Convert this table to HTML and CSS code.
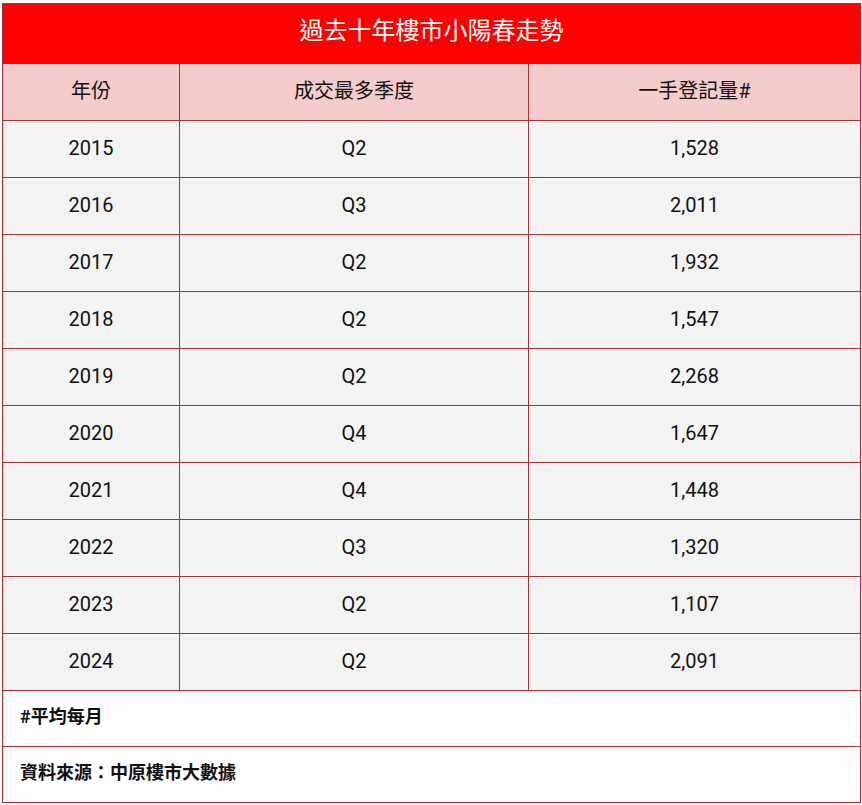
FILE: index.html
```html
<!DOCTYPE html>
<html lang="zh-Hant">
<head>
<meta charset="utf-8">
<title>過去十年樓市小陽春走勢</title>
<link rel="stylesheet" href="styles.css">
</head>
<body>
<table class="data">
  <colgroup>
    <col class="c1"><col class="c2"><col class="c3">
  </colgroup>
  <thead>
    <tr class="title-row"><th colspan="3">過去十年樓市小陽春走勢</th></tr>
    <tr class="head-row"><th>年份</th><th>成交最多季度</th><th>一手登記量#</th></tr>
  </thead>
  <tbody>
    <tr><td>2015</td><td>Q2</td><td>1,528</td></tr>
    <tr><td>2016</td><td>Q3</td><td>2,011</td></tr>
    <tr><td>2017</td><td>Q2</td><td>1,932</td></tr>
    <tr><td>2018</td><td>Q2</td><td>1,547</td></tr>
    <tr><td>2019</td><td>Q2</td><td>2,268</td></tr>
    <tr><td>2020</td><td>Q4</td><td>1,647</td></tr>
    <tr><td>2021</td><td>Q4</td><td>1,448</td></tr>
    <tr><td>2022</td><td>Q3</td><td>1,320</td></tr>
    <tr><td>2023</td><td>Q2</td><td>1,107</td></tr>
    <tr><td>2024</td><td>Q2</td><td>2,091</td></tr>
  </tbody>
  <tfoot>
    <tr><td colspan="3">#平均每月</td></tr>
    <tr><td colspan="3">資料來源：中原樓市大數據</td></tr>
  </tfoot>
</table>
</body>
</html>
```
FILE: styles.css
```css
html, body {
  margin: 0;
  padding: 0;
  background: #ffffff;
}
body {
  padding: 3px 2px 0 2px;
  font-family: Roboto, "Noto Sans CJK TC", sans-serif;
  color: #111;
}
.data {
  width: 858px;
  border-collapse: collapse;
  table-layout: fixed;
  font-size: 20px;
}
.c1 { width: 177px; }
.c2 { width: 349px; }
.c3 { width: 332px; }
.data th, .data td {
  border: 1px solid #a83232;
  text-align: center;
  padding: 0 0 3px 0;
  font-weight: normal;
  line-height: 1.2;
}
.data .title-row th {
  background: #ff0000;
  color: #ffffff;
  height: 54px;
  padding-bottom: 5px;
  font-size: 24px;
  border-bottom-color: #ff0000;
}
.data .head-row th {
  background: #f4cccc;
  height: 53px;
  font-size: 20px;
}
.data tbody td {
  background: #f3f3f3;
  height: 53px;
}
.data tfoot td {
  background: #ffffff;
  height: 52px;
  text-align: left;
  padding-left: 17px;
  font-weight: bold;
  font-size: 18px;
}
```
